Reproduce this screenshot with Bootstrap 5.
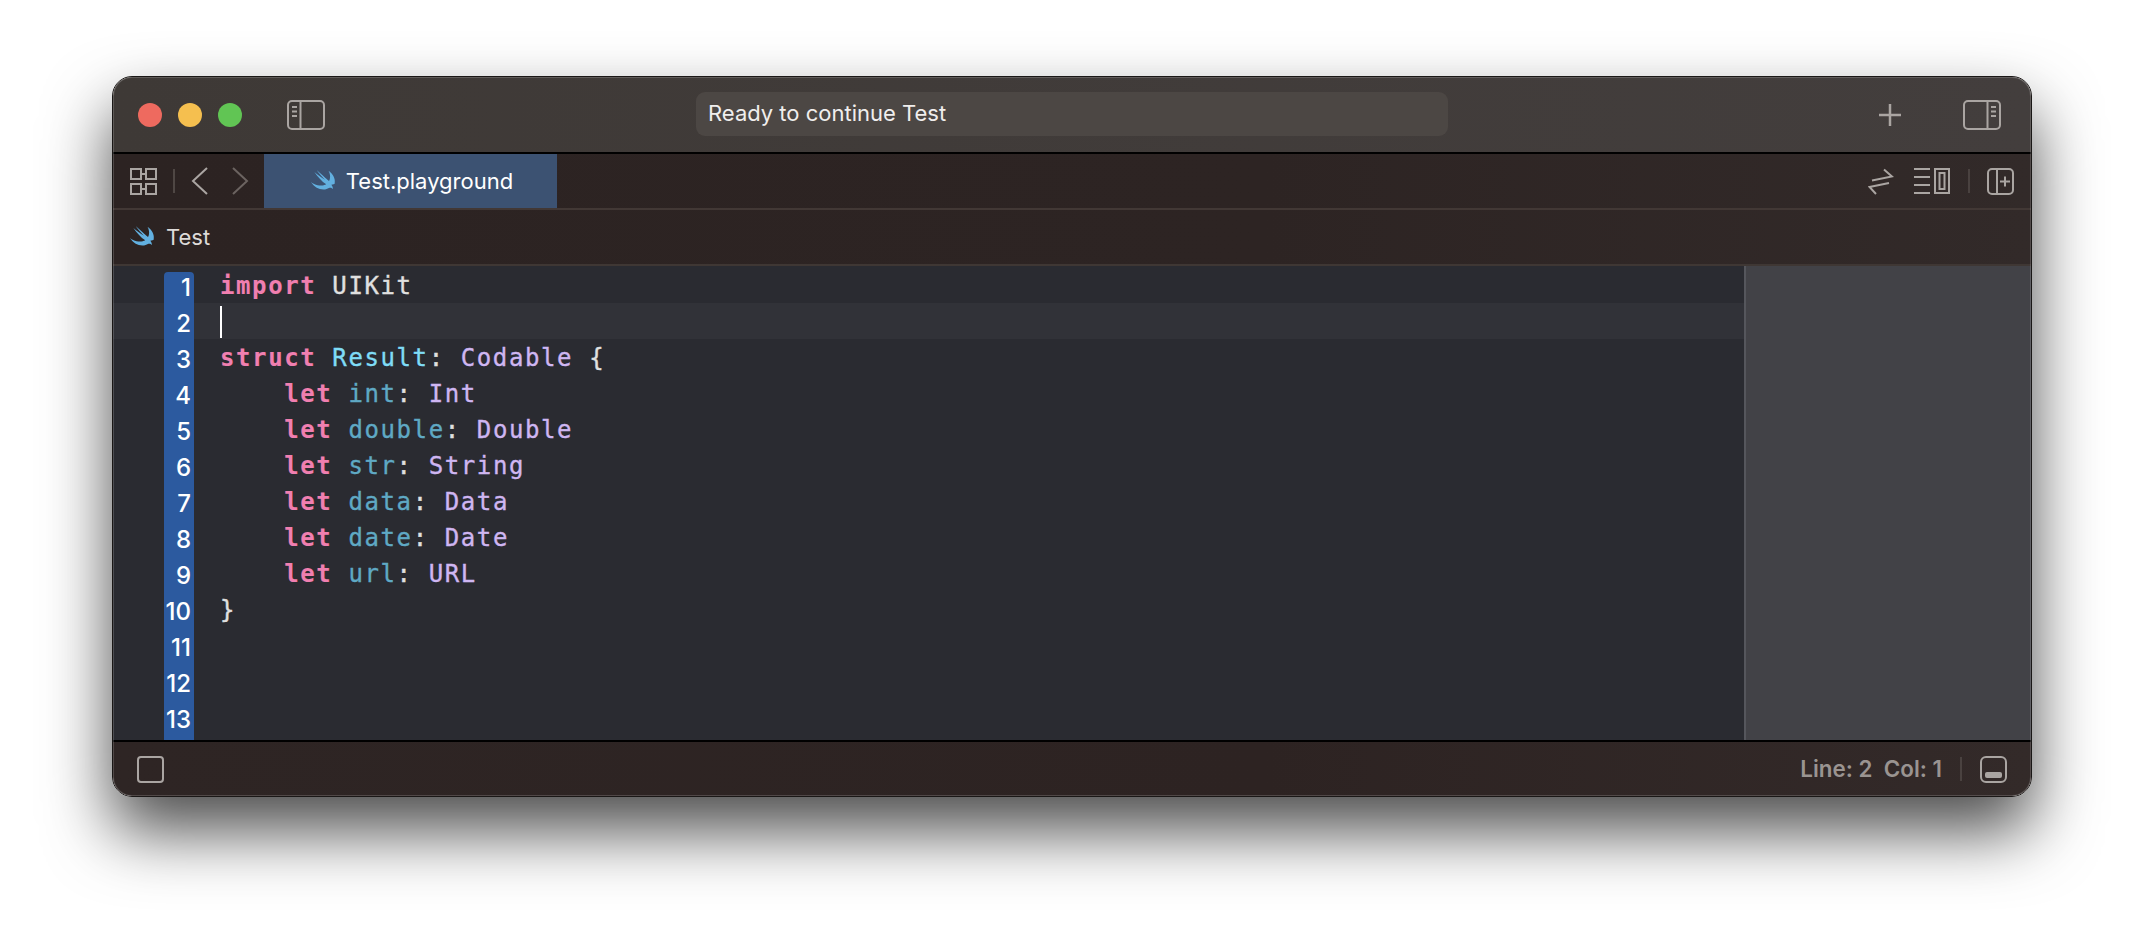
<!DOCTYPE html>
<html lang="en">
<head>
<meta charset="utf-8">
<title>Test.playground</title>
<link href="https://cdn.jsdelivr.net/npm/bootstrap@5.3.0/dist/css/bootstrap.min.css" rel="stylesheet">
<style>
html,body{height:100%;background:#fff;overflow:hidden}
body{font-family:Inter,"Liberation Sans",sans-serif}
.xwin{position:relative;width:1920px;height:721px;margin:76px 0 0 112px;border:1px solid #1a1716;border-radius:20px;overflow:hidden;box-shadow:0 34px 66px 0 rgba(0,0,0,.7);display:flex;flex-direction:column}
.xwin::after{content:"";position:absolute;inset:0;border-radius:19px;box-shadow:inset 0 0 0 1px rgba(255,255,255,.17);pointer-events:none}
.xtitle{height:77px;flex:none;background:linear-gradient(90deg,#3e3936,#433e3d);border-bottom:2px solid #000;padding-left:25px}
.xdot{width:24px;height:24px;border-radius:50%;flex:none;margin-right:16px}
.xpill{width:752px;height:44px;flex:none;margin:0 0 2px 370px;border-radius:9px;background:#4c4744;color:#f0eeed;font-size:22px;padding-left:12px}
.xtabs{height:56px;flex:none;background:linear-gradient(90deg,#2c2322,#2d2423 60%,#322a29);border-bottom:2px solid #423835;padding-left:17px}
.xtab{width:293px;height:54px;flex:none;background:#3c5272;color:#fff;font-size:22px;gap:10px;margin-left:15px;padding-left:3px}
.xpath{height:56px;flex:none;background:linear-gradient(90deg,#2c2322,#2d2423 60%,#322a29);border-bottom:2px solid #3f3734;padding-left:17px;color:#dedbd9;font-size:22px;gap:11px}
.xedit{flex:1 1 auto;min-height:0;background:#2a2b31}
.xcode{width:1631px;flex:none;padding-top:1px;font-family:"DejaVu Sans Mono","Liberation Mono",monospace;font-size:24px;letter-spacing:1.6px;color:#e0e0e0;-webkit-text-stroke:.35px currentColor}
.xrow{height:36px;display:flex;line-height:38px;white-space:pre}
.xrow-cur{background:#313238}
.xnum{width:30px;flex:none;margin:0 26px 0 51px;background:#2c5a9f;color:#fff;font-family:Inter,"Liberation Sans",sans-serif;font-size:24px;font-weight:500;letter-spacing:0;text-align:right;padding:4px 3px 0 0;line-height:33px;-webkit-text-stroke:0}
.xnum-first{margin-top:5px;padding-top:0;line-height:31px;border-radius:4px 4px 0 0}
.xrow-end{height:5px}
.xkw{color:#f07fb0;font-weight:700;-webkit-text-stroke:.1px currentColor}
.xdecl{color:#7fdcf6}
.xprop{color:#5fa9c4}
.xtype{color:#cfb6f2}
.xcaret{display:inline-block;width:2px;height:32px;background:#fff;margin:3px 0 0 0;vertical-align:top}
.xside{flex:1 1 auto;background:#424247;border-left:2px solid #55565c}
.xstatus{flex:none;height:56px;background:linear-gradient(90deg,#2e2524,#2d2322 60%,#332a29);border-top:2px solid #000;padding:0 24px;color:#9a9491;font-size:22.4px;font-weight:600}
.xsep{width:2px;height:24px;background:#4a4240;flex:none}
svg{display:block;flex:none}
.ic{fill:none;stroke:#aaa5a2;stroke-width:2}
</style>
</head>
<body>
<div class="xwin">
  <div class="xtitle d-flex align-items-center">
    <span class="xdot" style="background:#ee6a5f"></span>
    <span class="xdot" style="background:#f5bf4f"></span>
    <span class="xdot" style="background:#61c554"></span>
    <svg class="ic" style="margin-left:28px" width="40" height="32" viewBox="0 0 40 32"><rect x="2" y="2" width="36" height="28" rx="4"/><path d="M14.500 2v28M6 8h5M6 12.500h5M6 17h5" /></svg>
    <div class="xpill d-flex align-items-center">Ready to continue Test</div>
    <svg class="ic" style="margin-left:430px" width="24" height="24" viewBox="0 0 24 24"><path d="M12 1v22M1 12h22" stroke-width="2.500"/></svg>
    <svg class="ic" style="margin-left:60px" width="40" height="32" viewBox="0 0 40 32"><rect x="2" y="2" width="36" height="28" rx="4"/><path d="M25.500 2v28M29 8h5M29 12.500h5M29 17h5"/></svg>
  </div>
  <div class="xtabs d-flex align-items-center">
    <svg class="ic" width="27" height="27" viewBox="0 0 27 27"><path d="M1 1h10v10H1zM16 1h10v10H16zM1 16h10v10H1zM16 16h10v10H16zM11 6h5v3M11 21h5v-3"/></svg>
    <span class="xsep ms-3" style="background:#4f4744"></span>
    <svg class="ic" style="margin-left:16px" width="18" height="28" viewBox="0 0 18 28"><path d="M16 1 2 14l14 13"/></svg>
    <svg class="ic" style="margin-left:22px;stroke:#6b6360" width="18" height="28" viewBox="0 0 18 28"><path d="M2 1l14 13L2 27"/></svg>
    <div class="xtab d-flex align-items-center justify-content-center">
      <svg width="25" height="22" viewBox="1 3.500 20 17.500" fill="#62b0e0"><path d="M19.800 14.600c.1-.3.2-.7.2-1.100C20.600 10.300 18.500 6.500 15 4c1.900 3.500 1.400 6.600.4 8.200C13 10.400 9 6.600 5.500 3.500c2.200 3.200 4.400 5.600 6.600 7.700C9.500 9.500 6 7 3.700 5c2.500 3.700 6 7.600 9.500 9.900-2.500 1.400-6.100 1.400-9.700-.2-.9-.4-1.600-.9-2.500-1.600 2 3.500 6 6 10 6 1.900 0 3.200-.7 4.300-1.300.7-.3 2.100-.6 3 .9.300-.5.300-1.900-1-3.500z"/></svg>
      <span>Test.playground</span>
    </div>
    <svg class="ic" style="margin-left:1311px" width="26" height="27" viewBox="0 0 26 27"><path d="M4 12.500 24 8.500 16 1.500M21 15 1.500 19 8 26"/></svg>
    <svg class="ic" style="margin-left:20px" width="36" height="26" viewBox="0 0 36 26"><path d="M0 1h16M0 9h16M0 17h16M0 25h16"/><rect x="21" y="1" width="14" height="24"/><rect x="25.500" y="5" width="5" height="16"/></svg>
    <span class="xsep" style="margin-left:18px"></span>
    <svg class="ic" style="margin-left:17px" width="27" height="27" viewBox="0 0 27 27"><rect x="1" y="1" width="25" height="25" rx="4"/><path d="M10 1v25M18 8.500v10M13 13.500h10"/></svg>
  </div>
  <div class="xpath d-flex align-items-center">
    <svg width="25" height="22" viewBox="1 3.500 20 17.500" fill="#62b0e0"><path d="M19.800 14.600c.1-.3.2-.7.2-1.100C20.600 10.300 18.500 6.500 15 4c1.900 3.500 1.400 6.600.4 8.200C13 10.400 9 6.600 5.500 3.500c2.200 3.200 4.400 5.600 6.600 7.700C9.500 9.500 6 7 3.700 5c2.500 3.700 6 7.600 9.500 9.900-2.500 1.400-6.100 1.400-9.700-.2-.9-.4-1.600-.9-2.500-1.600 2 3.500 6 6 10 6 1.900 0 3.200-.7 4.300-1.300.7-.3 2.100-.6 3 .9.300-.5.300-1.900-1-3.500z"/></svg>
    <span>Test</span>
  </div>
  <div class="xedit d-flex">
    <div class="xcode">
      <div class="xrow"><span class="xnum xnum-first">1</span><span><span class="xkw">import</span> UIKit</span></div>
      <div class="xrow xrow-cur"><span class="xnum">2</span><span class="xcaret"></span></div>
      <div class="xrow"><span class="xnum">3</span><span><span class="xkw">struct</span> <span class="xdecl">Result</span>: <span class="xtype">Codable</span> {</span></div>
      <div class="xrow"><span class="xnum">4</span><span>    <span class="xkw">let</span> <span class="xprop">int</span>: <span class="xtype">Int</span></span></div>
      <div class="xrow"><span class="xnum">5</span><span>    <span class="xkw">let</span> <span class="xprop">double</span>: <span class="xtype">Double</span></span></div>
      <div class="xrow"><span class="xnum">6</span><span>    <span class="xkw">let</span> <span class="xprop">str</span>: <span class="xtype">String</span></span></div>
      <div class="xrow"><span class="xnum">7</span><span>    <span class="xkw">let</span> <span class="xprop">data</span>: <span class="xtype">Data</span></span></div>
      <div class="xrow"><span class="xnum">8</span><span>    <span class="xkw">let</span> <span class="xprop">date</span>: <span class="xtype">Date</span></span></div>
      <div class="xrow"><span class="xnum">9</span><span>    <span class="xkw">let</span> <span class="xprop">url</span>: <span class="xtype">URL</span></span></div>
      <div class="xrow"><span class="xnum">10</span><span>}</span></div>
      <div class="xrow"><span class="xnum">11</span></div>
      <div class="xrow"><span class="xnum">12</span></div>
      <div class="xrow"><span class="xnum">13</span></div>
      <div class="xrow xrow-end"><span class="xnum"></span></div>
    </div>
    <div class="xside"></div>
  </div>
  <div class="xstatus d-flex align-items-center">
    <svg class="ic" width="27" height="27" viewBox="0 0 27 27"><rect x="1" y="1" width="25" height="25" rx="3"/></svg>
    <span class="ms-auto">Line: 2&nbsp;&nbsp;Col: 1</span>
    <span class="xsep" style="margin-left:18px"></span>
    <svg class="ic" style="margin-left:18px" width="27" height="27" viewBox="0 0 27 27"><rect x="1" y="1" width="25" height="25" rx="5"/><rect x="5" y="16" width="17" height="6" rx="2" fill="#aaa5a2" stroke="none"/></svg>
  </div>
</div>
<script src="https://cdn.jsdelivr.net/npm/bootstrap@5.3.0/dist/js/bootstrap.bundle.min.js"></script>
</body>
</html>
